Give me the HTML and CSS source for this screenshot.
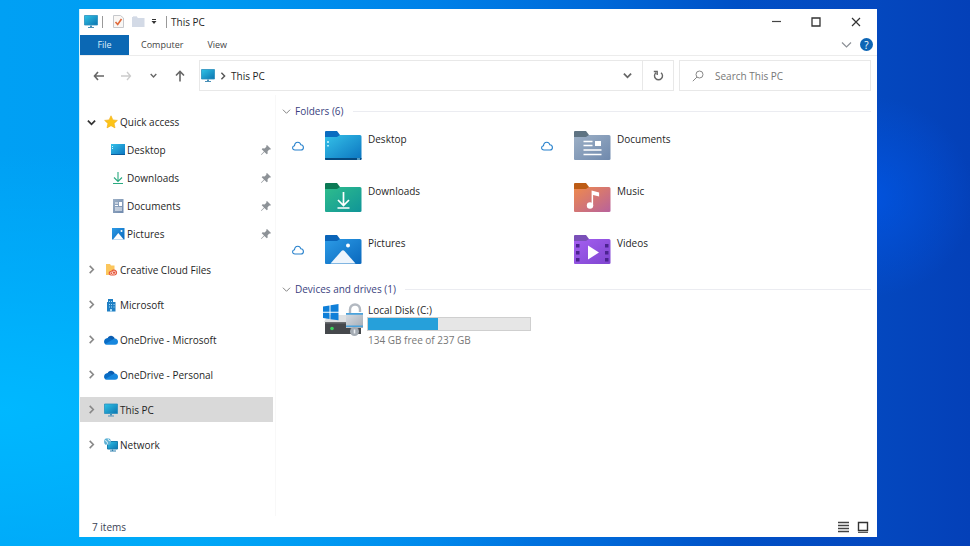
FILE: index.html
```html
<!DOCTYPE html>
<html lang="en">
<head>
    <meta charset="UTF-8">
    <meta name="viewport" content="width=device-width, initial-scale=1.0">
    <title>This PC</title>
    <link rel="stylesheet" href="styles.css">
</head>
<body>
    <!-- Shared icon shapes -->
    <svg class="sprite" aria-hidden="true">
        <defs>
            <linearGradient id="g-screen" x1="0" y1="0" x2="1" y2="1"><stop offset="0" stop-color="#2fc3e6"/><stop offset="1" stop-color="#0d74b0"/></linearGradient>
            <linearGradient id="g-desktop" x1="0" y1="0" x2="1" y2="1"><stop offset="0" stop-color="#35c1e8"/><stop offset="1" stop-color="#0b74c0"/></linearGradient>
            <linearGradient id="g-downloads" x1="0" y1="0" x2="1" y2="1"><stop offset="0" stop-color="#2fbd8c"/><stop offset="1" stop-color="#109598"/></linearGradient>
            <linearGradient id="g-pictures" x1="0" y1="0" x2="1" y2="1"><stop offset="0" stop-color="#2c9be6"/><stop offset="1" stop-color="#0a68bd"/></linearGradient>
            <linearGradient id="g-documents" x1="0" y1="0" x2="1" y2="1"><stop offset="0" stop-color="#9db0c6"/><stop offset="1" stop-color="#6f89ad"/></linearGradient>
            <linearGradient id="g-music" x1="0" y1="0" x2="1" y2="1"><stop offset="0" stop-color="#ef8a4c"/><stop offset="1" stop-color="#b8629c"/></linearGradient>
            <linearGradient id="g-videos" x1="0" y1="0" x2="1" y2="1"><stop offset="0" stop-color="#a45ff0"/><stop offset="1" stop-color="#7f45d0"/></linearGradient>
            <linearGradient id="g-metal" x1="0" y1="0" x2="1" y2="1"><stop offset="0" stop-color="#d9dee4"/><stop offset="1" stop-color="#a3abb5"/></linearGradient>
        </defs>
        <symbol id="pc" viewBox="0 0 14 13">
            <path d="M.5.500h13v9.500H.5z" fill="url(#g-screen)" stroke="#2a8fbe" stroke-width=".8"/>
            <path d="M6 10.400h2v1.600H6z" fill="#4a8fb5"/>
            <path d="M4 12h6v1H4z" fill="#4a90b8"/>
        </symbol>
        <symbol id="right" viewBox="0 0 10 10"><path d="M3 1l4 4-4 4" fill="none" stroke="currentColor" stroke-width="1.800"/></symbol>
        <symbol id="down" viewBox="0 0 10 10"><path d="M1 3l4 4 4-4" fill="none" stroke="currentColor" stroke-width="2"/></symbol>
        <symbol id="back" viewBox="0 0 12 10"><path d="M11 5H1.500M5 1L1.500 5 5 9" fill="none" stroke="currentColor" stroke-width="1.600"/></symbol>
        <symbol id="pin" viewBox="0 0 10 10"><path d="M6 0l4 4-1 .8-.8-.2-1.700 1.900.2 1.900-.9.900L3.400 7 .4 10 0 9.600l3-3L.7 4.200l.9-.9 1.900.2 1.900-1.700L5.200.8z" fill="#8d9297"/></symbol>
        <symbol id="cloud" viewBox="0 0 12 10"><path d="M3 9C1.400 9 .6 8 .6 6.800S1.400 4.900 2.500 4.800C2.700 2.600 4 1.200 5.800 1.200c1.600 0 2.600 1 3 2.500 1.600.1 2.600 1.200 2.600 2.700S10.400 9 9 9z" fill="#fff" stroke="#2680cc" stroke-width="1.100"/></symbol>
        <symbol id="onedrive" viewBox="0 0 14 10">
            <path d="M3.500 3.500C4.500.3 8.900-.6 10.800 3.600L7 7z" fill="#0b5cb0"/>
            <path d="M3.600 3c1-.2 2 0 3 .6l4 2.500L2 9.400C-.8 8.700-.8 3.600 3.600 3z" fill="#0a6cc4"/>
            <path d="M10.500 3.500c1.900-.2 3.500 1.200 3.500 3.200 0 1.800-1.100 3-3 3H3c-1 0-1.500-.3-1.800-.6z" fill="#1787de"/>
        </symbol>
    </svg>

    <div class="window">
        <header class="title-bar">
            <svg class="icon-pc" aria-hidden="true"><use href="#pc"/></svg>
            <span class="divider"></span>
            <button class="tool tool-check" aria-label="Properties">
                <svg width="11" height="13" viewBox="0 0 11 13"><path d="M.5.500h7l3 2.500v9.500H.5z" fill="#f9f7f5" stroke="#c6c8cc"/><path d="M2.500 7l2.200 2.500L8.500 4" fill="none" stroke="#e0693a" stroke-width="1.600"/></svg>
            </button>
            <button class="tool tool-folder" aria-label="New folder">
                <svg width="13" height="11" viewBox="0 0 13 11"><path d="M0 1h5l1 1h6.500v9H0z" fill="#d3dae6"/><path d="M1 0h4v1H1z" fill="#e2e6ee"/></svg>
            </button>
            <button class="tool tool-more" aria-label="Customize toolbar">
                <svg width="6" height="6" viewBox="0 0 6 6"><path d="M1 0h4v1H1zM.5 2h5L3 5z" fill="#333"/></svg>
            </button>
            <span class="divider"></span>
            <h1 class="title">This PC</h1>
            <div class="window-buttons">
                <button aria-label="Minimize"><svg width="10" height="10" viewBox="0 0 10 10"><path d="M1 4.500h9" stroke="#444" stroke-width="1.200"/></svg></button>
                <button aria-label="Maximize"><svg width="10" height="10" viewBox="0 0 10 10"><path d="M1 1h8v8H1z" fill="none" stroke="#333" stroke-width="1.300"/></svg></button>
                <button aria-label="Close"><svg width="10" height="10" viewBox="0 0 10 10"><path d="M1 1l8 8M9 1L1 9" stroke="#333" stroke-width="1.200"/></svg></button>
            </div>
        </header>

        <nav class="tabs">
            <a class="tab tab-file" href="#">File</a>
            <a class="tab" href="#">Computer</a>
            <a class="tab" href="#">View</a>
            <button class="expand" aria-label="Expand ribbon"><svg width="11" height="8" viewBox="0 0 11 8"><path d="M1 1.500l4.500 4.500L10 1.500" fill="none" stroke="#8c9096" stroke-width="1.200"/></svg></button>
            <button class="help" aria-label="Help">?</button>
        </nav>

        <div class="address-row">
            <div class="nav-buttons">
                <button aria-label="Back"><svg width="12" height="10"><use href="#back"/></svg></button>
                <button class="disabled" aria-label="Forward" disabled><svg width="12" height="10" viewBox="0 0 12 10"><path d="M1 5h9.500M7 1l3.500 4L7 9" fill="none" stroke="currentColor" stroke-width="1.300"/></svg></button>
                <button aria-label="Recent locations"><svg width="7" height="7"><use href="#down"/></svg></button>
                <button aria-label="Up"><svg width="10" height="12" viewBox="0 0 10 12"><path d="M5 11.500V1.500M1 5.500l4-4 4 4" fill="none" stroke="currentColor" stroke-width="1.600"/></svg></button>
            </div>
            <div class="address">
                <svg class="icon-pc" aria-hidden="true"><use href="#pc"/></svg>
                <svg class="crumb-arrow" aria-hidden="true"><use href="#right"/></svg>
                <a class="crumb" href="#">This PC</a>
                <button class="history" aria-label="Previous locations"><svg width="9" height="9"><use href="#down"/></svg></button>
                <button class="refresh" aria-label="Refresh"><svg width="11" height="12" viewBox="0 0 11 12"><path d="M8 2.700A4 4 0 1 1 3 2.700M.8 1.500h3.400v3.400" fill="none" stroke="#666" stroke-width="1.400"/></svg></button>
            </div>
            <label class="search">
                <svg width="12" height="12" viewBox="0 0 12 12" aria-hidden="true"><circle cx="7.500" cy="4.500" r="3.500" fill="none" stroke="#888"/><path d="M5 7L.8 11.200" stroke="#888"/></svg>
                <input type="text" placeholder="Search This PC" aria-label="Search This PC">
            </label>
        </div>

        <div class="content">
            <aside class="sidebar">
                <ul class="quick">
                    <li><a class="row open" href="#"><svg class="arrow"><use href="#down"/></svg><svg class="row-icon" viewBox="0 0 14 14"><path d="M7 .8l1.900 4.100 4.500.5-3.300 3 .9 4.500L7 10.700l-4 2.200.9-4.500-3.300-3 4.500-.5z" fill="#fcc419" stroke="#f3ac12" stroke-width=".6"/></svg>Quick access</a></li>
                    <li><a class="row child" href="#"><svg class="row-icon" viewBox="0 0 14 14"><path d="M0 1h14v11H0z" fill="url(#g-desktop)"/><path d="M0 11h14v1H0z" fill="#0b5c9c"/><path d="M1 3h1v1H1zM1 5h1v1H1z" fill="#c9f2ff"/></svg>Desktop<svg class="pin"><use href="#pin"/></svg></a></li>
                    <li><a class="row child" href="#"><svg class="row-icon" viewBox="0 0 14 14"><path d="M7 1v9.500M3 6.500l4 4 4-4M2 12.500h10" fill="none" stroke="#2aaa80" stroke-width="1.100"/></svg>Downloads<svg class="pin"><use href="#pin"/></svg></a></li>
                    <li><a class="row child" href="#"><svg class="row-icon" viewBox="0 0 14 14"><path d="M2 0h10.500v14H2z" fill="url(#g-documents)"/><path d="M4 4h3M4 6.500h3M4 9h7M4 11h7" stroke="#fff"/><path d="M8 3h3v4H8z" fill="#fff"/></svg>Documents<svg class="pin"><use href="#pin"/></svg></a></li>
                    <li><a class="row child" href="#"><svg class="row-icon" viewBox="0 0 14 14"><path d="M1 1h12.500v11.500H1z" fill="url(#g-pictures)"/><path d="M2 12.500L7.300 6l5.400 6.500z" fill="#fff"/><circle cx="10.500" cy="4" r="1" fill="#fff"/></svg>Pictures<svg class="pin"><use href="#pin"/></svg></a></li>
                </ul>
                <ul class="places">
                    <li><a class="row" href="#"><svg class="arrow"><use href="#right"/></svg><svg class="row-icon" viewBox="0 0 14 14"><path d="M2 1h4l1 1.500h3.500V12H2z" fill="#fbc65c"/><path d="M7 12.500c-1.500 0-2.300-1-2.300-2.200 0-1.400 1.100-2.200 2.300-2.200.6-1.100 1.500-1.700 2.800-1.700 2 0 3.300 1.300 3.300 3.100 0 1.700-1.200 3-3.100 3z" fill="#e4573d"/><circle cx="7.500" cy="10.300" r="1.200" fill="none" stroke="#ffe0d5" stroke-width=".8"/><circle cx="10" cy="9.700" r="1.600" fill="none" stroke="#ffe0d5" stroke-width=".8"/></svg>Creative Cloud Files</a></li>
                    <li><a class="row" href="#"><svg class="arrow"><use href="#right"/></svg><svg class="row-icon" viewBox="0 0 14 14"><path d="M4 1h5v3h2.500v9.500H3V4h1z" fill="#1f7fc4"/><path d="M5 3h1v1H5zM7 3h1v1H7zM5 6h1v1H5zM7 6h1v1H7zM9.500 6h1v1h-1zM5 8.500h1v1H5zM7 8.500h1v1H7zM9.500 8.500h1v1h-1zM6 11h2v2.500H6z" fill="#a9dcf8"/></svg>Microsoft</a></li>
                    <li><a class="row" href="#"><svg class="arrow"><use href="#right"/></svg><svg class="row-icon"><use href="#onedrive"/></svg>OneDrive - Microsoft</a></li>
                    <li><a class="row" href="#"><svg class="arrow"><use href="#right"/></svg><svg class="row-icon"><use href="#onedrive"/></svg>OneDrive - Personal</a></li>
                    <li><a class="row selected" href="#"><svg class="arrow"><use href="#right"/></svg><svg class="row-icon"><use href="#pc"/></svg>This PC</a></li>
                    <li><a class="row" href="#"><svg class="arrow"><use href="#right"/></svg><svg class="row-icon" viewBox="0 0 14 14"><path d="M3.500 3.500h10V11h-10z" fill="url(#g-screen)" stroke="#1a7fae"/><path d="M6 13h6M8.500 11.500v1.500" stroke="#2b7fae" stroke-width="1.200"/><circle cx="3.500" cy="3.700" r="3.400" fill="#5bb0d4"/><path d="M1 2.500l2 1 .5 2-1 1.200M4 .5l.5 1.700 2 .8" stroke="#dff3fa" fill="none"/></svg>Network</a></li>
                </ul>
            </aside>

            <main class="main">
                <section class="group">
                    <h2 class="group-title"><svg class="group-arrow" viewBox="0 0 10 10"><path d="M1 3l4 4 4-4" fill="none" stroke="#777"/></svg>Folders (6)</h2>
                    <div class="folders">
                        <a class="folder" href="#">
                            <svg class="cloud"><use href="#cloud"/></svg>
                            <svg class="folder-icon" viewBox="0 0 38 32"><path d="M1 2q0-1 1-1h11l3 4v5H1z" fill="#0a6cc0"/><path d="M1 7h12l3-2h20q1.500 0 1.500 1.500V29q0 1-1.500 1H2q-1 0-1-1z" fill="url(#g-desktop)"/><path d="M1 28h36.500v1q0 1-1.500 1H2q-1 0-1-1z" fill="#064a80"/><path d="M3 11h2v2H3zM3 15h2v1.500H3zM33 28.500h3v1h-3z" fill="#a5e8fb"/></svg>
                            <span>Desktop</span>
                        </a>
                        <a class="folder" href="#">
                            <svg class="cloud"><use href="#cloud"/></svg>
                            <svg class="folder-icon" viewBox="0 0 38 32"><path d="M1 2q0-1 1-1h11l3 4v5H1z" fill="#5e7382"/><path d="M1 7h12l3-2h20q1.500 0 1.500 1.500V29q0 1-1.500 1H2q-1 0-1-1z" fill="url(#g-documents)"/><path d="M10.500 11.500h9M10.500 15.500h9M10.500 20h18M10.500 24.500h18" stroke="#fff" stroke-width="1.600"/><path d="M22 11h6v5h-6z" fill="#fff"/></svg>
                            <span>Documents</span>
                        </a>
                        <a class="folder" href="#">
                            <span class="cloud"></span>
                            <svg class="folder-icon" viewBox="0 0 38 32"><path d="M1 2q0-1 1-1h11l3 4v5H1z" fill="#0c7a55"/><path d="M1 7h12l3-2h20q1.500 0 1.500 1.500V29q0 1-1.500 1H2q-1 0-1-1z" fill="url(#g-downloads)"/><path d="M19.500 10v13M14 18l5.500 5.500L25 18M13.500 26h12" fill="none" stroke="#fff" stroke-width="1.700"/></svg>
                            <span>Downloads</span>
                        </a>
                        <a class="folder" href="#">
                            <span class="cloud"></span>
                            <svg class="folder-icon" viewBox="0 0 38 32"><path d="M1 2q0-1 1-1h11l3 4v5H1z" fill="#bd5c16"/><path d="M1 7h12l3-2h20q1.500 0 1.500 1.500V29q0 1-1.500 1H2q-1 0-1-1z" fill="url(#g-music)"/><circle cx="17" cy="23.500" r="3.200" fill="#fff"/><path d="M18.600 24V8.500l7.500 2v4l-6-1.500v11z" fill="#fff"/></svg>
                            <span>Music</span>
                        </a>
                        <a class="folder" href="#">
                            <svg class="cloud"><use href="#cloud"/></svg>
                            <svg class="folder-icon" viewBox="0 0 38 32"><path d="M1 2q0-1 1-1h11l3 4v5H1z" fill="#0a64b8"/><path d="M1 7h12l3-2h20q1.500 0 1.500 1.500V29q0 1-1.500 1H2q-1 0-1-1z" fill="url(#g-pictures)"/><path d="M6.500 29.500L17.500 17q1.500-1.500 3 0l11 12.500z" fill="#eef5fc"/><circle cx="24" cy="11.500" r="2" fill="#fff"/></svg>
                            <span>Pictures</span>
                        </a>
                        <a class="folder" href="#">
                            <span class="cloud"></span>
                            <svg class="folder-icon" viewBox="0 0 38 32"><path d="M1 2q0-1 1-1h11l3 4v5H1z" fill="#7a50b8"/><path d="M1 7h12l3-2h20q1.500 0 1.500 1.500V29q0 1-1.500 1H2q-1 0-1-1z" fill="url(#g-videos)"/><path d="M3 10h3.500v3.500H3zM3 17h3.500v3.500H3zM3 24h3.500v3.500H3zM32 10h3.500v3.500H32zM32 17h3.500v3.500H32zM32 24h3.500v3.500H32z" fill="#4b2390"/><path d="M15 11.500L26 18.500 15 25.500z" fill="#fff"/></svg>
                            <span>Videos</span>
                        </a>
                    </div>
                </section>

                <section class="group">
                    <h2 class="group-title"><svg class="group-arrow" viewBox="0 0 10 10"><path d="M1 3l4 4 4-4" fill="none" stroke="#777"/></svg>Devices and drives (1)</h2>
                    <a class="drive" href="#">
                        <svg class="drive-icon" viewBox="0 0 40 34">
                            <path d="M5 12h30l4 7H1z" fill="#dfe1e3"/>
                            <path d="M2 19h36v12H2z" fill="#45484c"/>
                            <path d="M2 19h36v1.500H2z" fill="#6a6d70"/>
                            <circle cx="9" cy="25.500" r="1.800" fill="#3bd15c"/>
                            <path d="M0 3.500l6.500-1v6.200H0zM7.500 2.300L15.500 1v7.700h-8zM0 9.700h6.500V16L0 15zM7.500 9.700h8v7.500l-8-1z" fill="#0f7fd8"/>
                            <path d="M27 11V6.500a5 5 0 0 1 10 0V9" fill="none" stroke="#b3b9c1" stroke-width="2.400"/>
                            <path d="M23 10h17v15H23z" fill="url(#g-metal)"/>
                            <path d="M23 10h17v1.800H23zM23 22.500h17v1.500H23z" fill="#4aa2dc"/>
                            <circle cx="31.500" cy="28.500" r="4.500" fill="#a4abb3"/>
                            <path d="M31.500 26.500v4" stroke="#e8ecf0" stroke-width="1.600"/>
                        </svg>
                        <span class="drive-info">
                            <span class="drive-text">Local Disk (C:)</span>
                            <span class="usage"><span class="usage-fill" style="width: 43%"></span></span>
                            <span class="drive-text free">134 GB free of 237 GB</span>
                        </span>
                    </a>
                </section>
            </main>
        </div>

        <footer class="status-bar">
            <span>7 items</span>
            <div class="views">
                <button aria-label="Details view"><svg width="12" height="12" viewBox="0 0 12 12"><path d="M1 1.500h11M1 4.500h11M1 7.500h11M1 10.500h11" stroke="#444" stroke-width="1.400"/></svg></button>
                <button aria-label="Large icons view"><svg width="12" height="12" viewBox="0 0 12 12"><path d="M1.500 1.500h9v8h-9z" fill="none" stroke="#333" stroke-width="1.400"/><path d="M1 11.300h10" stroke="#333"/></svg></button>
            </div>
        </footer>
    </div>
</body>
</html>
```
FILE: styles.css
```css
* { margin: 0; padding: 0; box-sizing: border-box; }
body {
    display: flex;
    min-height: 100vh;
    padding: 9px 93px 9px 79px;
    font-family: "Open Sans", "Noto Sans", sans-serif;
    font-size: 10px;
    line-height: 14px;
    color: #1f1f1f;
    background:
        radial-gradient(circle at 90% 36%, rgba(0, 90, 240, 0.6) 0, rgba(0, 90, 240, 0) 100px),
        radial-gradient(ellipse at 0% 75%, #00b8ff 0%, rgba(0, 184, 255, 0) 45%),
        linear-gradient(90deg, #00a0f4 0%, #009cf2 20%, #0080e8 45%, #0068d8 62%, #0050c6 76%, #0448bf 90%, #0440b8 100%);
}
a { color: inherit; text-decoration: none; }
ul { list-style: none; }
button {
    display: flex;
    align-items: center;
    justify-content: center;
    border: none;
    background: none;
    color: inherit;
    font: inherit;
    cursor: pointer;
}
svg { display: block; flex: none; }
.sprite { position: absolute; width: 0; height: 0; }

.window {
    flex: 1;
    display: flex;
    flex-direction: column;
    background: #fff;
    border-left: 1px solid #d4f3fc;
}

.icon-pc { width: 14px; height: 13px; }

/* Title bar */
.title-bar { display: flex; align-items: center; height: 25px; padding: 0 1px 0 4px; }
.divider { width: 1px; height: 12px; margin-left: 4px; background: #999; }
.tool { height: 16px; margin-left: 6px; }
.tool-check { margin-left: 10px; margin-right: 2px; }
.title { margin-left: 4px; font-size: 10px; font-weight: 400; }
.title-bar .tool-more + .divider { margin-left: 9px; }
.window-buttons { display: flex; margin-left: auto; }
.window-buttons button { width: 40px; height: 24px; }

/* Ribbon tabs */
.tabs { display: flex; align-items: center; height: 22px; padding-right: 4px; border-bottom: 1px solid #ececec; font-size: 9px; }
.tab { padding: 3px 12px; height: 20px; color: #444; }
.tab-file { width: 49px; text-align: center; background: #0b68b4; color: #dcecf9; }
.expand { margin-left: auto; width: 20px; height: 20px; }
.help { width: 13px; height: 13px; margin-left: 4px; border-radius: 50%; background: #0d65b5; color: #fff; font-size: 10px; }

/* Address bar */
.address-row { display: flex; align-items: center; gap: 5px; padding: 4px 6px 4px 5px; }
.nav-buttons { display: flex; width: 109px; color: #666; }
.nav-buttons button { flex: 1; height: 24px; }
.nav-buttons .disabled { color: #ccc; }
.address { flex: 1; display: flex; align-items: center; height: 31px; padding-left: 1px; border: 1px solid #e8e8e8; }
.crumb-arrow { width: 8px; height: 8px; margin: 0 4px; color: #555; }
.crumb { flex: 1; }
.history { width: 30px; height: 29px; color: #666; }
.refresh { width: 31px; height: 29px; border-left: 1px solid #e8e8e8; }
.search { display: flex; align-items: center; flex: 0 0 192px; height: 31px; padding-left: 12px; gap: 11px; border: 1px solid #e8e8e8; }
.search input { flex: 1; min-width: 0; border: none; outline: none; font: inherit; background: none; }
.search input::placeholder { color: #777; opacity: 1; }

.content { flex: 1; display: flex; }

/* Navigation pane */
.sidebar { flex: 0 0 196px; padding: 13px 2px 0 0; border-right: 1px solid #f8f8f8; }
.row { display: flex; align-items: center; height: 25px; padding-left: 7px; }
.arrow { width: 9px; height: 9px; margin-right: 8px; color: #888; }
.row-icon { width: 14px; height: 14px; margin-right: 2px; }
.open .arrow { color: #333; }
.quick { margin-bottom: 9px; }
.quick .row { height: 28px; }
.child { padding-left: 31px; }
.pin { width: 10px; height: 10px; margin-left: auto; margin-right: 2px; }
.places { display: flex; flex-direction: column; gap: 10px; }
.selected { background: #d9d9d9; }

/* File list */
.main { flex: 1; padding: 9px 6px 0 6px; }
.group-title { display: flex; align-items: center; font-size: 10px; font-weight: 400; color: #3b3f80; }
.group-title::after { content: ""; flex: 1; height: 1px; margin-left: 9px; background: #ebecf1; }
.group-arrow { width: 9px; height: 9px; margin-right: 4px; }
.folders { display: grid; grid-template-columns: repeat(auto-fill, 249px); grid-auto-rows: 32px; row-gap: 20px; padding: 12px 0 16px 10px; }
.folder { display: flex; }
.cloud { width: 12px; height: 10px; margin: 11px 20px 0 0; }
.folder-icon { width: 38px; height: 32px; margin-right: 6px; }
.folder span:last-child { padding-top: 2px; }

.drive { display: flex; margin-top: 7px; padding-left: 41px; }
.drive-icon { width: 40px; height: 34px; margin-right: 4px; }
.drive-info { display: flex; flex-direction: column; }
.drive-text { padding-left: 1px; }
.usage { width: 164px; height: 14px; background: #e6e6e6; border: 1px solid #cfcfcf; }
.usage-fill { display: block; height: 12px; background: #26a0da; }
.free { margin-top: 2px; color: #777; }

/* Status bar */
.status-bar { display: flex; align-items: center; justify-content: space-between; height: 21px; padding: 0 8px 0 12px; color: #3a3f55; }
.views { display: flex; gap: 8px; }
```
